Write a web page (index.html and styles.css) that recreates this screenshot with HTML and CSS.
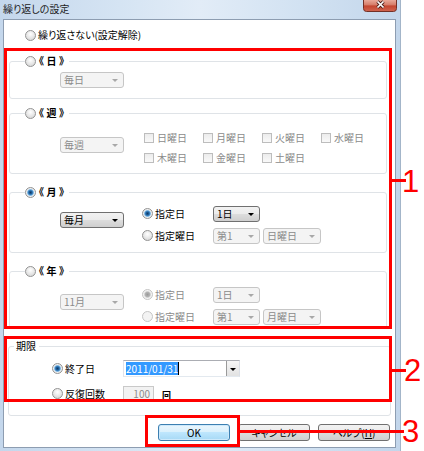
FILE: index.html
```html
<!DOCTYPE html>
<html lang="ja">

<head>
    <meta charset="UTF-8">
    <meta name="viewport" content="width=device-width, initial-scale=1.0">
    <title>繰り返しの設定</title>
    <link rel="stylesheet" href="styles.css">
</head>

<body>
    <div class="page">
        <div class="window">
            <div class="titlebar">
                <span class="title">繰り返しの設定</span>
                <svg class="close" width="34" height="12" viewBox="0 0 34 12">
                    <defs>
                        <linearGradient id="closeGrad" x1="0" y1="0" x2="0" y2="1">
                            <stop offset="0" stop-color="#e9a898" />
                            <stop offset="0.45" stop-color="#d57a66" />
                            <stop offset="0.5" stop-color="#c4452f" />
                            <stop offset="1" stop-color="#d06550" />
                        </linearGradient>
                    </defs>
                    <path d="M0.5 0 V8.5 Q0.5 11.5 3.5 11.5 H30.5 Q33.5 11.5 33.5 8.5 V0" fill="url(#closeGrad)" stroke="#733026" />
                    <path d="M14.5 1.5 L20.5 7.5 M20.5 1.5 L14.5 7.5" stroke="#4a1d16" stroke-width="3.2" />
                    <path d="M14.5 1.5 L20.5 7.5 M20.5 1.5 L14.5 7.5" stroke="#ffffff" stroke-width="1.7" />
                </svg>
            </div>

            <div class="client">
                <div class="opt-none"><span class="radio"></span>繰り返さない(設定解除)</div>

                <!-- daily -->
                <div class="group g-day">
                    <div class="group-title"><span class="radio"></span><b>《日》</b></div>
                    <div class="group-body">
                        <span class="combo off">毎日</span>
                    </div>
                </div>

                <!-- weekly -->
                <div class="group g-week">
                    <div class="group-title"><span class="radio"></span><b>《週》</b></div>
                    <div class="group-body">
                        <span class="combo off">毎週</span>
                        <div class="days">
                            <span class="check">日曜日</span>
                            <span class="check">月曜日</span>
                            <span class="check">火曜日</span>
                            <span class="check">水曜日</span>
                            <span class="check">木曜日</span>
                            <span class="check">金曜日</span>
                            <span class="check">土曜日</span>
                        </div>
                    </div>
                </div>

                <!-- monthly -->
                <div class="group g-month">
                    <div class="group-title"><span class="radio on"></span><b>《月》</b></div>
                    <div class="group-body">
                        <span class="combo">毎月</span>
                        <div class="options">
                            <span class="opt"><span class="radio on"></span>指定日</span>
                            <div class="combos"><span class="combo w47">1日</span></div>
                            <span class="opt"><span class="radio"></span>指定曜日</span>
                            <div class="combos">
                                <span class="combo off w47">第1</span>
                                <span class="combo off w58">日曜日</span>
                            </div>
                        </div>
                    </div>
                </div>

                <!-- yearly -->
                <div class="group g-year">
                    <div class="group-title"><span class="radio"></span><b>《年》</b></div>
                    <div class="group-body">
                        <span class="combo off">11月</span>
                        <div class="options muted">
                            <span class="opt"><span class="radio off on"></span>指定日</span>
                            <div class="combos"><span class="combo off w47">1日</span></div>
                            <span class="opt"><span class="radio off"></span>指定曜日</span>
                            <div class="combos">
                                <span class="combo off w47">第1</span>
                                <span class="combo off w58">月曜日</span>
                            </div>
                        </div>
                    </div>
                </div>

                <!-- limit -->
                <div class="group g-limit">
                    <div class="group-title">期限</div>
                    <div class="limit-rows">
                        <span class="opt"><span class="radio on"></span>終了日</span>
                        <span class="datefield">
                            <span class="sel">2011/01/31</span><span class="caret"></span>
                            <span class="drop"></span>
                        </span>
                        <span class="opt"><span class="radio"></span>反復回数</span>
                        <span class="count">
                            <span class="numfield">100</span>
                            <b class="unit">回</b>
                        </span>
                    </div>
                </div>

                <div class="buttons">
                    <button class="btn default">OK</button>
                    <button class="btn">キャンセル</button>
                    <button class="btn">ヘルプ(<u>H</u>)</button>
                </div>
            </div>
        </div>

        <!-- annotations -->
        <div class="mark box1"></div>
        <div class="mark box2"></div>
        <div class="mark box3"></div>
        <div class="lead lead1"></div>
        <div class="lead lead2"></div>
        <div class="lead lead3"></div>
        <span class="num num1">1</span>
        <span class="num num2">2</span>
        <span class="num num3">3</span>
    </div>
</body>

</html>
```

FILE: styles.css
```css
/* General */
body {
    margin: 0;
    background-color: #fff;
    font-family: "Noto Sans CJK JP", "Noto Sans", sans-serif;
    font-size: 10px;
    line-height: 12px;
    color: #000;
    font-feature-settings: "palt";
}

.page {
    position: relative;
    width: 424px;
    height: 451px;
    overflow: hidden;
}

/* Window frame */
.window {
    width: 401px;
    height: 451px;
    box-sizing: border-box;
    display: flex;
    flex-direction: column;
    background: linear-gradient(to right, #c4d7ec, #d5e4f3 30%, #e2ecf7 50%, #d2e2f2 75%, #c3d6eb);
    border-right: 1px solid #a3b5c9;
}

.titlebar {
    height: 19px;
    flex: none;
    display: flex;
    justify-content: space-between;
    align-items: flex-start;
}

.title {
    margin: 3px 0 0 3px;
    color: #1c1c1c;
}

.close {
    display: block;
    margin-right: 3px;
}

.client {
    flex: 1;
    width: 393px;
    margin: 0 0 3px 3px;
    box-sizing: border-box;
    background-color: #fff;
    border: 1px solid #8d9db1;
}

/* Radio buttons and check boxes */
.radio {
    flex: none;
    width: 11px;
    height: 11px;
    box-sizing: border-box;
    border-radius: 50%;
    border: 1px solid #939393;
    background: radial-gradient(circle at 50% 35%, #ffffff, #e3e3e3 60%, #cfcfcf);
}

.radio.on {
    background: radial-gradient(circle, #123a63 0, #1f5f9c 1.5px, #4f97d1 2.6px, #a9cfec 3.3px, #f2f2f2 3.8px, #d8d8d8 100%);
}

.radio.off {
    border-color: #c5c5c5;
    background: #f3f3f3;
}

.radio.off.on {
    background: radial-gradient(circle, #999 0, #b3b3b3 2.3px, #dedede 3.3px, #f3f3f3 3.8px);
}

.opt-none {
    display: flex;
    align-items: center;
    gap: 2px;
    height: 12px;
    margin: 9px 0 0 21px;
}

.opt {
    display: flex;
    align-items: center;
    gap: 2px;
}

.check {
    display: flex;
    align-items: center;
    gap: 3px;
}

.check::before {
    content: "";
    width: 10px;
    height: 10px;
    box-sizing: border-box;
    border: 1px solid #bdbdbd;
    background: linear-gradient(#ececec, #f9f9f9);
}

/* Group boxes */
.group {
    margin: 0 8px 0 5px;
    border: 1px solid #dfe3e7;
    border-radius: 3px;
}

.group-title {
    display: flex;
    align-items: center;
    gap: 3px;
    width: max-content;
    height: 12px;
    margin: -7px 0 0 15px;
    padding-right: 2px;
    background-color: #fff;
}

.group-title b {
    letter-spacing: 2.5px;
}

.group-body {
    display: flex;
    align-items: flex-start;
    padding-left: 50px;
}

.g-day {
    margin-top: 20px;
}

.g-day .group-body {
    margin-top: 5px;
    padding-bottom: 10px;
}

.g-week {
    margin-top: 14px;
}

.g-week .group-body {
    margin-top: 12px;
    padding-bottom: 8px;
}

.g-week .combo {
    margin-top: 6px;
}

.g-month {
    margin-top: 18px;
}

.g-month .group-body {
    margin-top: 7px;
    padding-bottom: 8px;
}

.g-month .group-body > .combo {
    margin-top: 7px;
}

.g-year {
    margin-top: 18px;
}

.g-year .group-body {
    margin-top: 9px;
    padding-bottom: 3px;
}

.g-year .group-body > .combo {
    margin-top: 8px;
}

.g-limit {
    margin: 17px 4px 0 4px;
}

.g-limit .group-title {
    margin-left: 5px;
    padding: 0 3px 0 2px;
}

/* Combo boxes */
.combo {
    flex: none;
    display: flex;
    align-items: center;
    justify-content: space-between;
    width: 64px;
    height: 16px;
    box-sizing: border-box;
    padding: 0 5px 0 3px;
    border: 1px solid #707070;
    border-radius: 3px;
    background: linear-gradient(#f2f2f2, #ebebeb 50%, #dddddd 50%, #cfcfcf);
}

.combo::after {
    content: "";
    border: 3px solid transparent;
    border-top-color: #000;
    border-bottom: 0;
    margin-top: 1px;
}

.combo.off {
    border-color: #c6c6c6;
    background: #f4f4f4;
    color: #8b8b8b;
}

.combo.off::after {
    border-top-color: #a8a8a8;
}

.w47 {
    width: 47px;
}

.w58 {
    width: 58px;
}

.days {
    display: grid;
    grid-template-columns: repeat(4, 59px);
    grid-auto-rows: 14px;
    row-gap: 6px;
    margin-left: 20px;
    color: #8b8b8b;
}

.options {
    display: grid;
    grid-template-columns: 71px auto;
    grid-auto-rows: 17px;
    row-gap: 5px;
    align-items: center;
    margin-left: 18px;
}

.combos {
    display: flex;
    gap: 3px;
}

.muted {
    color: #8b8b8b;
}

/* Limit */
.limit-rows {
    display: grid;
    grid-template-columns: 71px auto;
    grid-template-rows: 17px 15px;
    row-gap: 9px;
    align-items: center;
    margin: 8px 0 0 43px;
    padding-bottom: 14px;
}

.datefield {
    display: flex;
    align-items: center;
    width: 117px;
    height: 17px;
    box-sizing: border-box;
    padding-left: 2px;
    border: 1px solid #abadb3;
    border-color: #abadb3 #dbdfe6 #e3e9ef #e2e3ea;
    background-color: #fff;
}

.sel {
    background-color: #3399ff;
    color: #fff;
    line-height: 13px;
}

.caret {
    width: 1px;
    height: 13px;
    background-color: #000;
}

.drop {
    display: flex;
    align-items: center;
    justify-content: center;
    width: 13px;
    height: 15px;
    margin-left: auto;
    box-sizing: border-box;
    border-left: 1px solid #9a9a9a;
    background: linear-gradient(#f6f6f6, #e2e2e2);
}

.drop::after {
    content: "";
    border: 3px solid transparent;
    border-top-color: #000;
    border-bottom: 0;
    margin-top: 1px;
}

.count {
    display: flex;
    align-items: center;
    gap: 8px;
}

.numfield {
    width: 31px;
    height: 15px;
    box-sizing: border-box;
    padding-right: 3px;
    border: 1px solid #c9c9c9;
    background-color: #f2f2f2;
    color: #8b8b8b;
    text-align: right;
    line-height: 13px;
}

.unit {
    font-size: 9px;
    margin-top: 4px;
}

/* Buttons */
.buttons {
    display: flex;
    justify-content: flex-end;
    gap: 8px;
    margin: 8px 5px 0 0;
}

.btn {
    display: flex;
    align-items: center;
    justify-content: center;
    width: 72px;
    height: 17px;
    padding: 0;
    box-sizing: border-box;
    border: 1px solid #707070;
    border-radius: 3px;
    background: linear-gradient(#f2f2f2, #ebebeb 50%, #dddddd 50%, #cfcfcf);
    font: inherit;
    color: #000;
}

.btn.default {
    border-color: #3c7fb1;
    background: linear-gradient(#eaf6fd, #d9f0fc 50%, #bee6fd 50%, #a7d9f5);
    box-shadow: inset 0 0 0 1px #cde9fb;
}

/* Red annotations */
.mark {
    position: absolute;
    box-sizing: border-box;
    border: 3px solid #f00;
}

.box1 {
    left: 4px;
    top: 48px;
    width: 388px;
    height: 281px;
}

.box2 {
    left: 4px;
    top: 336px;
    width: 388px;
    height: 66px;
}

.box3 {
    left: 145px;
    top: 415px;
    width: 95px;
    height: 32px;
}

.lead {
    position: absolute;
    height: 3px;
    background-color: #f00;
}

.lead1 {
    left: 392px;
    top: 179px;
    width: 14px;
}

.lead2 {
    left: 392px;
    top: 369px;
    width: 14px;
}

.lead3 {
    left: 240px;
    top: 430px;
    width: 164px;
}

.num {
    position: absolute;
    font: 31px/31px "Liberation Sans", Arial, sans-serif;
    color: #f00;
}

.num1 {
    left: 402px;
    top: 166px;
}

.num2 {
    left: 404px;
    top: 355px;
}

.num3 {
    left: 402px;
    top: 416px;
}
```
